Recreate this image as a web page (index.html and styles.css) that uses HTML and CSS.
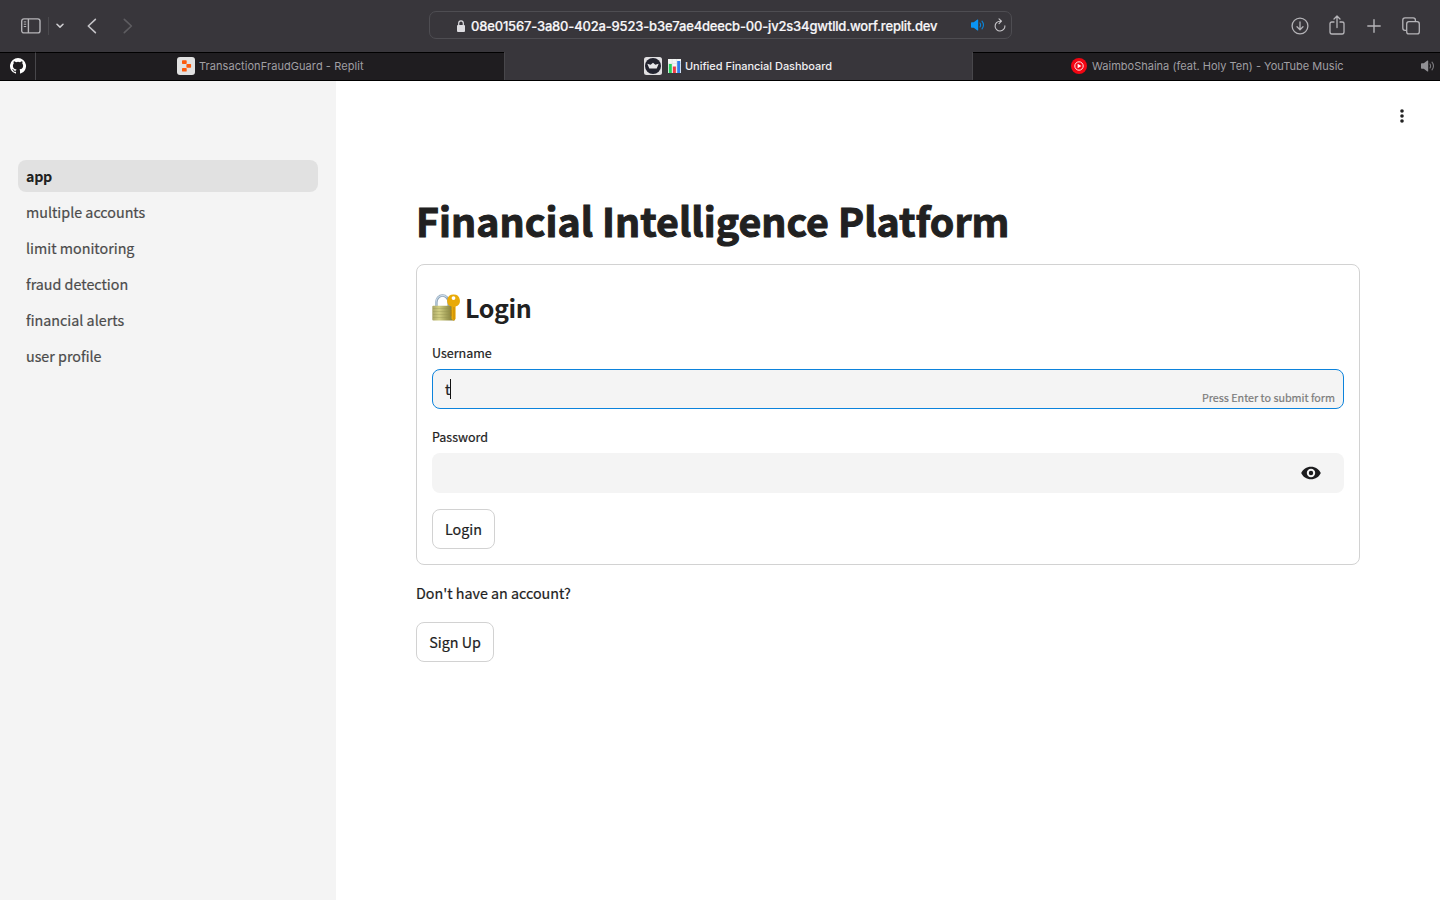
FILE: index.html
```html
<!DOCTYPE html>
<html lang="en">
<head>
<meta charset="utf-8">
<title>Unified Financial Dashboard</title>
<link rel="stylesheet" href="styles.css">
</head>
<body>
<header class="browser">
  <div class="toolbar">
    <div class="tools-left">
      <svg class="ic-sidebar" width="20" height="16" viewBox="0 0 20 16" fill="none" stroke="#b5b4b8" stroke-width="1.4"><rect x=".7" y=".9" width="18.3" height="14" rx="2.2"/><path d="M7.4 1v14"/><path d="M2.8 3.9h2.4M2.8 6.2h2.4M2.8 8.5h2.4" stroke-width="1"/></svg>
      <span class="divider"></span>
      <svg class="ic-chev" width="8" height="6" viewBox="0 0 8 6" fill="none" stroke="#d0cfd2" stroke-width="1.5" stroke-linecap="round" stroke-linejoin="round"><path d="M1 1.3l3 2.8 3-2.8"/></svg>
      <svg class="ic-back" width="10" height="16" viewBox="0 0 10 16" fill="none" stroke="#c4c3c7" stroke-width="1.6" stroke-linecap="round" stroke-linejoin="round"><path d="M8.4 1.3L1.3 8l7.1 6.7"/></svg>
      <svg class="ic-fwd" width="10" height="16" viewBox="0 0 10 16" fill="none" stroke="#5e5d61" stroke-width="1.6" stroke-linecap="round" stroke-linejoin="round"><path d="M1.3 1.3L8.4 8l-7.1 6.7"/></svg>
    </div>
    <div class="address">
      <svg width="8" height="12" viewBox="0 0 8 12"><rect y="5" width="8" height="7" rx="1" fill="#dddce0"/><path d="M1.7 5.5V3.3a2.3 2.5 0 0 1 4.6 0v2.2" fill="none" stroke="#dddce0" stroke-width="1.2"/></svg>
      <span class="url">08e01567-3a80-402a-9523-b3e7ae4deecb-00-jv2s34gwtlld.worf.replit.dev</span>
      <svg class="ic-sound" width="14" height="12" viewBox="0 0 14 12"><path d="M0 4q0-.7.7-.7h2L6.4.6q.8-.5.8.4v10q0 .9-.8.4L2.7 8.7h-2Q0 8.700 0 8z" fill="#0a95f5"/><path d="M9 4q1.200 2 0 4M11 2.200q3 3.800 0 7.600" fill="none" stroke="#0a84d8" stroke-width="1.1" stroke-linecap="round"/></svg>
      <svg class="ic-reload" width="12" height="14" viewBox="0 0 12 14" fill="none" stroke="#c9c8cc" stroke-width="1.1" stroke-linecap="round" stroke-linejoin="round"><path d="M10.900 7.900A4.900 4.900 0 1 1 6 3.200h1.300M5 .8l2.500 2.400L5 5.600"/></svg>
    </div>
    <div class="tools-right">
      <svg width="18" height="18" viewBox="0 0 18 18" fill="none" stroke="#b5b4b8" stroke-width="1.300" stroke-linecap="round" stroke-linejoin="round"><circle cx="9" cy="9" r="7.900"/><path d="M9 5v7.500M6 9.800l3 3 3-3"/></svg>
      <svg class="ic-share" width="16" height="20" viewBox="0 0 16 20" fill="none" stroke="#b5b4b8" stroke-width="1.300" stroke-linecap="round" stroke-linejoin="round"><path d="M5 7H2.900Q1 7 1 8.800v8.300Q1 19 2.900 19h10.200q1.900 0 1.900-1.900V8.800Q15 7 13.100 7H11M8 12.500V1.300M5 4l3-3 3 3"/></svg>
      <svg width="14" height="14" viewBox="0 0 14 14" fill="none" stroke="#b5b4b8" stroke-width="1.400" stroke-linecap="round"><path d="M7 .8v12.400M.8 7h12.400"/></svg>
      <svg width="18" height="18" viewBox="0 0 18 18" fill="none" stroke="#b5b4b8" stroke-width="1.300"><rect x="4.700" y="4.700" width="12.600" height="12.200" rx="2.200"/><path d="M4.500 13.300H3Q.8 13.300.8 11V3Q.8.800 3 .8h8.200q2.200 0 2.200 2.200v1.500"/></svg>
    </div>
  </div>
  <nav class="tabs">
    <div class="tab pinned"><svg width="16" height="16" viewBox="0 0 16 16" fill="#fff"><path d="M8 0a8 8 0 0 0-2.530 15.590c.4.070.55-.17.55-.38v-1.490c-2.230.48-2.690-.94-2.690-.94-.36-.92-.89-1.170-.89-1.170-.73-.5.060-.49.060-.49.8.060 1.230.83 1.230.83.71 1.220 1.870.87 2.330.66.070-.52.280-.87.500-1.070-1.770-.2-3.640-.89-3.640-3.950 0-.87.310-1.590.83-2.150-.09-.2-.36-1.020.07-2.120 0 0 .67-.21 2.200.82a7.700 7.700 0 0 1 4 0c1.530-1.030 2.200-.82 2.200-.82.44 1.100.17 1.920.08 2.120.51.560.82 1.280.82 2.150 0 3.070-1.870 3.750-3.650 3.950.29.250.54.730.54 1.480v2.190c0 .21.150.46.550.38A8 8 0 0 0 8 0z"/></svg></div>
    <div class="tab tab-replit">
      <svg width="18" height="18" viewBox="0 0 18 18"><rect width="18" height="18" rx="3" fill="#e1e1e1"/><g fill="#fc5a0c"><rect x="5" y="3.300" width="4.700" height="3.600" rx=".7"/><rect x="9.400" y="7" width="4.700" height="3.800" rx=".7"/><rect x="5" y="11" width="4.700" height="3.600" rx=".7"/></g></svg>
      <span class="t1">TransactionFraudGuard - Replit</span>
    </div>
    <div class="tab active">
      <svg width="18" height="18" viewBox="0 0 18 18"><rect width="18" height="18" rx="2.500" fill="#e1e0e2"/><circle cx="9" cy="9" r="8" fill="#22232f"/><path d="M3.300 6.800l3.400 1L9 5.800l2.300 2 3.400-1-2 4.700H5.300z" fill="#e5e5e8"/></svg>
      <svg class="chart" width="13" height="14" viewBox="0 0 13 14"><rect width="13" height="14" fill="#f4f6f4"/><path d="M0 4.500h13M0 9h13M4.200 0v14M8.600 0v14" stroke="#d5dcde" stroke-width=".5"/><rect x=".8" y="5" width="3" height="9" fill="#22cf58"/><rect x="4.900" y="7.500" width="3" height="6.500" fill="#f03a45"/><rect x="9.200" y="2" width="3" height="12" fill="#327dea"/></svg>
      <span class="t2">Unified Financial Dashboard</span>
    </div>
    <div class="tab tab-music">
      <svg width="16" height="16" viewBox="0 0 16 16"><circle cx="8" cy="8" r="8" fill="#f20512"/><circle cx="8" cy="8" r="4.200" fill="none" stroke="#fff" stroke-width=".9"/><path d="M6.600 5.700v4.600L10.400 8z" fill="#fff"/></svg>
      <span class="t3">WaimboShaina (feat. Holy Ten) - YouTube Music</span>
      <svg class="mute" width="14" height="12" viewBox="0 0 14 12"><path d="M0 4q0-.7.7-.7h2L6.400.6q.8-.5.8.4v10q0 .9-.8.4L2.700 8.700h-2Q0 8.700 0 8z" fill="#919094"/><path d="M9 4q1.200 2 0 4M11 2.200q3 3.800 0 7.600" fill="none" stroke="#7a797d" stroke-width="1.100" stroke-linecap="round"/></svg>
    </div>
  </nav>
</header>
<div class="app">
  <aside class="sidebar">
    <a class="nav on"><span class="n0">app</span></a>
    <a class="nav"><span>multiple accounts</span></a>
    <a class="nav"><span>limit monitoring</span></a>
    <a class="nav"><span>fraud detection</span></a>
    <a class="nav"><span>financial alerts</span></a>
    <a class="nav"><span>user profile</span></a>
  </aside>
  <main class="main">
    <div class="menu"><svg width="4" height="14" viewBox="0 0 4 14" fill="#222"><circle cx="2" cy="2" r="1.800"/><circle cx="2" cy="7" r="1.800"/><circle cx="2" cy="12" r="1.800"/></svg></div>
    <h1 class="title">Financial Intelligence Platform</h1>
    <form class="card">
      <h2 class="login-head">
        <svg width="28" height="27" viewBox="0 0 28 27">
          <defs><linearGradient id="body" x1="0" x2="1"><stop offset="0" stop-color="#a9a565"/><stop offset=".3" stop-color="#d2cf83"/><stop offset=".6" stop-color="#a7a45c"/><stop offset="1" stop-color="#77702c"/></linearGradient></defs>
          <path d="M4.300 13V8.500a6.200 7 0 0 1 12.400 0V13" fill="none" stroke="#8fa5b8" stroke-width="2.600"/>
          <path d="M4 13V8.500a6.500 7.300 0 0 1 11-5" fill="none" stroke="#c9daea" stroke-width="1.100"/>
          <rect x=".3" y="11.800" width="22.700" height="14.700" rx="1" fill="url(#body)"/>
          <path d="M1 14.500h21.500M1 17.500h21.500M1 20.500h21.500M1 23.500h21.500" stroke="#918e4e" stroke-width=".5" opacity=".6"/>
          <path fill-rule="evenodd" d="M21.500.5a6.200 6.200 0 0 0-2 12.100V25l2.100 1.800 2-1.800V12.600A6.200 6.200 0 0 0 21.500.5zm0 1.700a1.900 1.900 0 1 1 0 3.800 1.900 1.900 0 0 1 0-3.800z" fill="#e9aa08"/>
          <path d="M22 13v12.500M19.500 16l-1 1 1 1-1 1 1 1-1 1 1 1" fill="none" stroke="#bc7d05" stroke-width=".8"/>
        </svg>
        <span>Login</span>
      </h2>
      <label class="label">Username</label>
      <div class="field focus"><span class="typed">t</span><i class="caret"></i><span class="hint">Press Enter to submit form</span></div>
      <label class="label second">Password</label>
      <div class="field pass"><svg width="20" height="14" viewBox="0 0 20 14"><path fill-rule="evenodd" d="M10 .7C5.600.7 1.800 3.200.2 7c1.600 3.800 5.400 6.300 9.800 6.300s8.200-2.500 9.800-6.300C18.200 3.200 14.400.7 10 .7zm0 10.500a4.200 4.200 0 1 1 0-8.400 4.200 4.200 0 0 1 0 8.400zM10 4.800a2.200 2.200 0 1 0 0 4.400 2.200 2.200 0 0 0 0-4.400z" fill="#1c1c1e"/></svg></div>
      <button type="button" class="btn btn-login"><span>Login</span></button>
    </form>
    <p class="ask">Don't have an account?</p>
    <button type="button" class="btn btn-sign"><span>Sign Up</span></button>
  </main>
</div>
</body>
</html>
```
FILE: styles.css
```css
* { box-sizing: border-box; }
body { margin: 0; width: 1440px; height: 900px; overflow: hidden; background: #fff; color: #212121; font-family: "Noto Sans CJK SC", sans-serif; display: flex; flex-direction: column; }
svg { display: block; flex: none; }
span { white-space: nowrap; }

/* Browser chrome */
.browser { height: 81px; background: #38363b; font-family: Inter, sans-serif; flex: none; }
.toolbar { height: 52px; display: grid; grid-template-columns: 429px 583px 1fr; }
.tools-left { display: flex; align-items: center; padding-left: 21px; }
.divider { width: 1px; height: 18px; background: #4a494d; margin: 0 7px 0 7px; }
.ic-back { margin-left: 23px; }
.ic-fwd { margin-left: 26px; }
.address { margin-top: 11px; height: 28px; border: 1px solid #4e4d52; border-radius: 7px; display: flex; align-items: center; padding-left: 27px; color: #f8f7f9; }
.address .url { width: 467px; margin-left: 6px; margin-top: 2px; font-size: 13px; line-height: 16px; font-weight: 500; letter-spacing: -.18px; -webkit-text-stroke: .2px; }
.address svg { margin-top: 2px; }
.address .ic-sound { margin-left: 33px; margin-top: 0; }
.address .ic-reload { margin-left: 9px; margin-top: 0; }
.tools-right { display: flex; align-items: center; padding-left: 279px; gap: 21px; }
.ic-share { margin: 0 1px 2px -1px; }
.tabs { height: 29px; display: grid; grid-template-columns: 36px 468px 469px 467px; border-bottom: 1px solid #000; }
.tab { display: flex; align-items: center; background: #1f1d20; border-top: 1px solid #000; padding-bottom: 1px; color: #a09fa3; font-size: 11px; line-height: 14px; }
.pinned { padding-left: 10px; border-right: 1px solid #48474b; }
.tab-replit { padding-left: 141px; }
.tab-replit span { margin-left: 4px; }
.active { background: #38363b; border-top-color: #38363b; border-left: 1px solid #48474b; border-right: 1px solid #48474b; padding-left: 139px; color: #f1f0f2; font-weight: 500; }
.chart { margin-left: 6px; }
.active span { margin-left: 4px; }
.tab-music { padding-left: 98px; }
.tab-music span { margin-left: 5px; width: 252px; }
.mute { margin-left: 77px; }
.t1 { letter-spacing: .07px; }
.t2 { letter-spacing: -.03px; }
.t3 { letter-spacing: .01px; }

/* App shell */
.app { flex: 1; display: grid; grid-template-columns: 336px 1fr; -webkit-text-stroke: .2px; }
.sidebar { background: #f4f4f4; padding: 79px 18px 0; display: flex; flex-direction: column; gap: 4px; }
.nav { height: 32px; border-radius: 8px; padding: 0 8px; display: flex; align-items: center; color: #4b4b4b; font-size: 14.300px; line-height: 24px; }
.nav.on { background: #e1e1e1; color: #212121; font-weight: 700; -webkit-text-stroke: 0; }
.n0 { letter-spacing: -.3px; }
.main { padding: 0 80px; display: flex; flex-direction: column; align-items: flex-start; }
.menu { align-self: flex-end; margin: 28px -44px 0 0; }
.title { margin: 70px 0 0; height: 53px; font-size: 39.300px; line-height: 53px; font-weight: 700; letter-spacing: .03px; white-space: nowrap; -webkit-text-stroke: 1px; }
.card { margin-top: 18px; width: 944px; height: 301px; border: 1px solid #d2d2d2; border-radius: 8px; padding: 15px; display: flex; flex-direction: column; align-items: flex-start; }
.login-head { margin: 10px 0 1px; height: 34px; display: flex; align-items: center; gap: 5px; font-size: 25px; line-height: 34px; font-weight: 700; letter-spacing: -.4px; -webkit-text-stroke: 0; }
.label { margin-top: 18px; height: 20px; font-size: 12.500px; line-height: 20px; }
.field { margin-top: 6px; width: 100%; height: 40px; border-radius: 8px; background: #f4f4f4; display: flex; align-items: center; }
.focus { border: 1px solid #0c83dc; padding-left: 12px; }
.typed { font-size: 14.300px; line-height: 24px; }
.caret { width: 1px; height: 20px; background: #111; }
.hint { margin: 18px 8px 0 auto; font-size: 10.750px; line-height: 16px; color: #7b7b7b; }
.pass { justify-content: flex-end; padding-right: 23px; }
.btn { height: 40px; padding: 0; border: 1px solid #d2d2d2; border-radius: 8px; background: #fff; color: #212121; font: 14.300px/24px "Noto Sans CJK SC", sans-serif; display: flex; justify-content: center; align-items: center; }
.btn-login { margin-top: 16px; width: 63px; }
.ask { margin: 16px 0 0; height: 24px; font-size: 14.300px; line-height: 24px; }
.btn-sign { margin-top: 17px; width: 78px; }
```
